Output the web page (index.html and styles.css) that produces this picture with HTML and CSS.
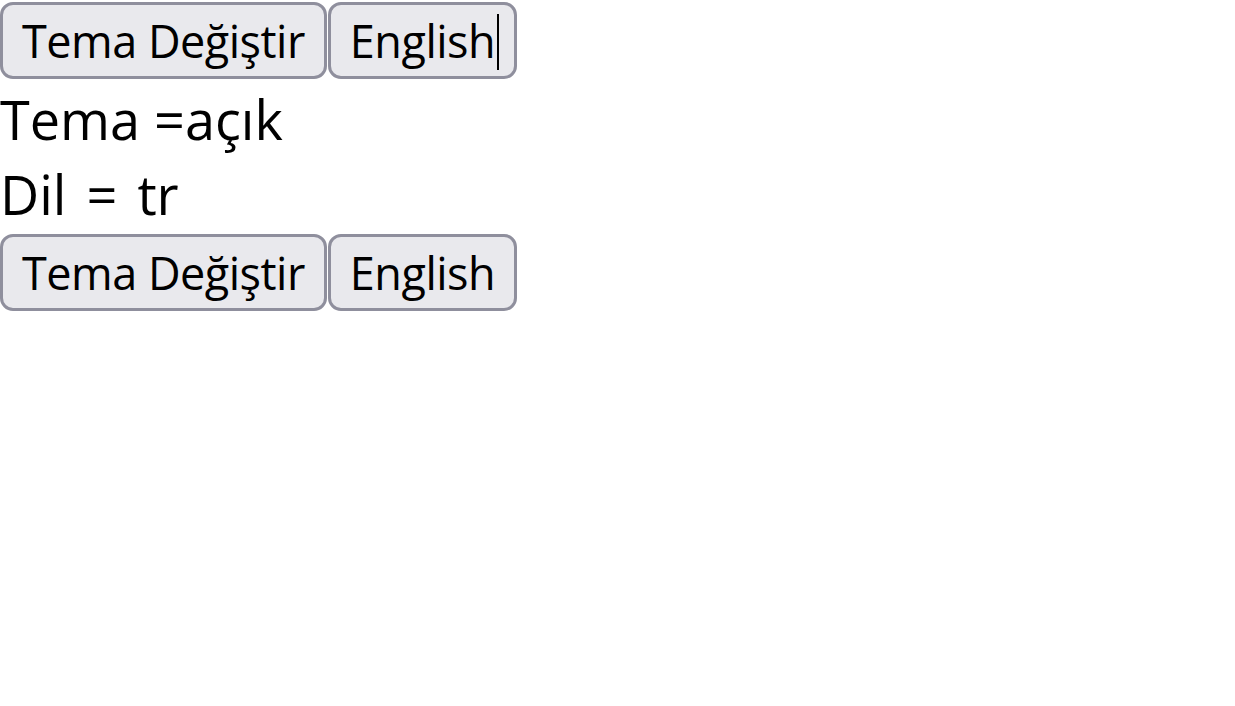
FILE: index.html
```html
<!DOCTYPE html>
<html lang="tr">
<head>
<meta charset="utf-8">
<title>Tema</title>
<link rel="stylesheet" href="styles.css">
</head>
<body>
<div class="row"><button class="btn">Tema Değiştir</button><button class="btn">English<span class="caret"></span></button></div>
<p class="line">Tema =açık</p>
<p class="line line-wide">Dil = tr</p>
<div class="row"><button class="btn">Tema Değiştir</button><button class="btn">English</button></div>
</body>
</html>
```

FILE: styles.css
```css
html, body {
  margin: 0;
  padding: 0;
  background: #ffffff;
}
body {
  font-family: "Open Sans", "Noto Sans", sans-serif;
  font-size: 54px;
  color: #000000;
}
.row {
  display: flex;
  gap: 1px;
  padding: 2px 0 3px 0;
}
.btn {
  position: relative;
  font-family: inherit;
  font-size: 45px;
  letter-spacing: -0.5px;
  color: #000;
  background: #e9e9ed;
  border: 3px solid #8f8f9d;
  border-radius: 13px;
  height: 77px;
  padding: 0 19px;
  line-height: 1;
  display: flex;
  align-items: center;
}
.caret {
  position: absolute;
  right: 15px;
  top: 9px;
  width: 2px;
  height: 56px;
  background: #000;
}
.line {
  margin: 0;
  line-height: 75px;
}
.line-wide {
  word-spacing: 6px;
}
```
